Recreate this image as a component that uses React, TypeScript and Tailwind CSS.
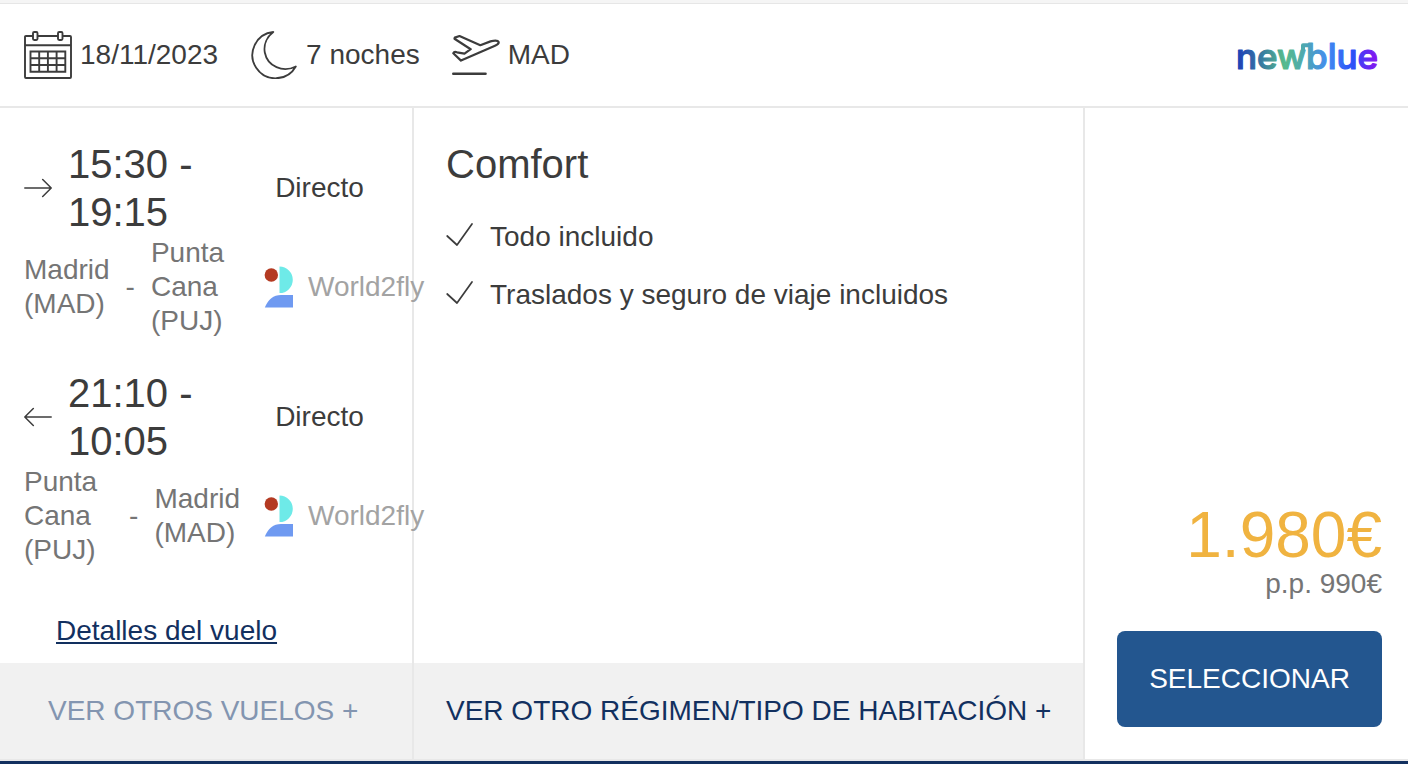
type Flight = {
  direction: "out" | "back";
  times: string;
  stops: string;
  from: string;
  to: string;
  airline: string;
};

const flights: Flight[] = [
  {
    direction: "out",
    times: "15:30 - 19:15",
    stops: "Directo",
    from: "Madrid (MAD)",
    to: "Punta Cana (PUJ)",
    airline: "World2fly",
  },
  {
    direction: "back",
    times: "21:10 - 10:05",
    stops: "Directo",
    from: "Punta Cana (PUJ)",
    to: "Madrid (MAD)",
    airline: "World2fly",
  },
];

const services = ["Todo incluido", "Traslados y seguro de viaje incluidos"];

function CalendarIcon() {
  return (
    <svg className="w-12 h-12 shrink-0" viewBox="0 0 48 48" fill="none" stroke="currentColor" strokeWidth="1.900" aria-hidden="true">
      <path d="M9 5H2Q1 5 1 6V46Q1 47 2 47H46Q47 47 47 46V6Q47 5 46 5H38.500M13.500 5H34M1 14.200H47" />
      <rect x="9" y="1" width="4.500" height="8" rx="1.200" />
      <rect x="34" y="1" width="4.500" height="8" rx="1.200" />
      <path d="M6.500 20.500H41.300V40.700H6.500ZM15.200 20.500V40.700M23.900 20.500V40.700M32.600 20.500V40.700M6.500 27.300H41.300M6.500 34H41.300" />
    </svg>
  );
}

function MoonIcon() {
  return (
    <svg className="w-12 h-12 shrink-0" viewBox="0 0 48 48" fill="none" stroke="currentColor" strokeWidth="1.800" strokeLinejoin="round" aria-hidden="true">
      <path d="M23.300 1A23.200 23.200 0 1 0 45.800 35.500C33 42 17.500 35.500 14.800 21.500C13.400 13.500 17 5.800 23.300 1Z" />
    </svg>
  );
}

function PlaneIcon() {
  return (
    <svg className="w-12 h-12 shrink-0" viewBox="0 0 48 48" fill="none" stroke="currentColor" strokeWidth="2.200" strokeLinejoin="round" strokeLinecap="round" aria-hidden="true">
      <path d="M2.800 6.600L7.500 5L28.300 14.200L38.500 10.400C42 9.400 46 9.400 46.600 11C47 12.400 45 14 43 14.800L9 29.600L1.300 22.200C1.900 20.900 3.500 20.700 5 21.300L12.500 22.600L18.700 18.200L2.500 7.800Z" />
      <path d="M1.300 42.700H33.500" strokeWidth="2.600" />
    </svg>
  );
}

function ArrowIcon({ back }: { back?: boolean }) {
  return (
    <svg className="w-7 h-7 shrink-0" viewBox="0 0 28 28" fill="none" stroke="currentColor" strokeWidth="1.500" strokeLinejoin="round" strokeLinecap="round" aria-hidden="true">
      {back ? <path d="M27.200 14H1M9.300 5.500L.8 14L9.300 22.500" /> : <path d="M.8 14H27M18.700 5.500L27.200 14L18.700 22.500" />}
    </svg>
  );
}

function CheckIcon() {
  return (
    <svg className="w-7 h-7 shrink-0" viewBox="0 0 28 28" fill="none" stroke="currentColor" strokeWidth="1.700" strokeLinejoin="round" strokeLinecap="round" aria-hidden="true">
      <path d="M1.200 13L11 22L26 .9" />
    </svg>
  );
}

function AirlineLogo() {
  return (
    <svg className="w-[30px] h-11 shrink-0" viewBox="0 0 30 44" aria-hidden="true">
      <circle cx="7.300" cy="10" r="6.700" fill="#b43a22" />
      <path d="M15.500 1.500A13.300 13.300 0 0 1 15.500 28.100Z" fill="#6eeae8" />
      <path d="M.8 42.500C4 34.500 9.500 30 17 30H29V42.500Z" fill="#6f9af1" />
    </svg>
  );
}

function BrandLogo() {
  return (
    <svg className="w-[142px] h-12 shrink-0 overflow-visible" viewBox="0 0 142 48" role="img" aria-label="newblue">
      <defs>
        <linearGradient id="brand" gradientUnits="userSpaceOnUse" x1="0" y1="0" x2="142" y2="0">
          <stop offset="0" stopColor="#1c3cb8" />
          <stop offset=".2" stopColor="#3c829e" />
          <stop offset=".34" stopColor="#56bb8c" />
          <stop offset=".48" stopColor="#4ea8b0" />
          <stop offset=".64" stopColor="#448cf0" />
          <stop offset=".82" stopColor="#2c50f8" />
          <stop offset="1" stopColor="#8a10f0" />
        </linearGradient>
      </defs>
      <text
        x="0"
        y="38"
        fill="url(#brand)"
        stroke="url(#brand)"
        strokeWidth="1.200"
        strokeLinejoin="round"
        className="font-['Inter',sans-serif] text-[35px] font-medium"
      >
        newblue
      </text>
      {/* bridge between the w and the b */}
      <path d="M67 20V14.300H74" fill="none" stroke="url(#brand)" strokeWidth="4" strokeLinejoin="round" />
    </svg>
  );
}

function FlightLeg({ flight }: { flight: Flight }) {
  return (
    <div>
      <div className="flex items-center pr-6">
        <div className="flex flex-1 items-center gap-4">
          <ArrowIcon back={flight.direction === "back"} />
          <span className="text-[40px] leading-[48px]">{flight.times}</span>
        </div>
        <span className="w-[137px] text-center">{flight.stops}</span>
      </div>
      <div className="flex items-center gap-6">
        <div className="flex w-[216px] shrink-0 items-center gap-4 text-[#757575]">
          <span>{flight.from}</span>
          <span>-</span>
          <span>{flight.to}</span>
        </div>
        <div className="flex items-center gap-3.5 whitespace-nowrap text-[#a3a3a3]">
          <AirlineLogo />
          <span>{flight.airline}</span>
        </div>
      </div>
    </div>
  );
}

export default function App() {
  return (
    <div className="border-b-[3px] border-[#12305f] bg-white font-['Liberation_Sans',Arial,sans-serif] text-[28px] leading-[34px] text-[#3c3c3c]">
      <div className="h-1 border-b border-[#e6e6e6] bg-[#f5f5f5]" />
      <header className="flex items-center justify-between border-b-2 border-[#e8e8e8] py-[27px] pl-6 pr-[30px]">
        <div className="flex items-center gap-8">
          <div className="flex items-center gap-2">
            <CalendarIcon />
            <span>18/11/2023</span>
          </div>
          <div className="flex items-center gap-2">
            <MoonIcon />
            <span>7 noches</span>
          </div>
          <div className="flex items-center gap-2">
            <PlaneIcon />
            <span>MAD</span>
          </div>
        </div>
        <BrandLogo />
      </header>

      <main className="grid grid-cols-[414fr_671fr_323fr] border-b-2 border-[#e8e8e8]">
        <section className="flex min-w-0 flex-col border-r-2 border-[#e8e8e8]">
          <div className="flex flex-1 flex-col pb-[15px] pl-6 pt-8">
            <div className="flex flex-col gap-[31px]">
              {flights.map((flight) => (
                <FlightLeg key={flight.direction} flight={flight} />
              ))}
            </div>
            <a
              href="#vuelo"
              className="mt-[47px] self-start px-8 text-[#12305f] underline decoration-2 underline-offset-2"
            >
              Detalles del vuelo
            </a>
          </div>
          <button className="h-24 bg-[#f1f1f1] px-12 text-left text-[#8395b0]">VER OTROS VUELOS +</button>
        </section>

        <section className="flex min-w-0 flex-col border-r-2 border-[#e8e8e8]">
          <div className="flex-1 px-8 pt-8">
            <h2 className="text-[40px] leading-[48px]">Comfort</h2>
            <ul className="mt-8 flex flex-col gap-6">
              {services.map((service) => (
                <li key={service} className="flex items-center gap-4">
                  <CheckIcon />
                  <span>{service}</span>
                </li>
              ))}
            </ul>
          </div>
          <button className="h-24 whitespace-nowrap bg-[#f1f1f1] px-8 text-left text-[#12305f]">
            VER OTRO RÉGIMEN/TIPO DE HABITACIÓN +
          </button>
        </section>

        <section className="flex min-w-0 flex-col justify-end pb-8 pl-8 pr-[26px] text-right">
          <p className="text-[64px] leading-[64px] text-[#f0b340]">1.980€</p>
          <p className="text-[#757575]">p.p. 990€</p>
          <button className="mt-[30px] h-24 rounded-lg bg-[#23568f] text-white">SELECCIONAR</button>
        </section>
      </main>
    </div>
  );
}
